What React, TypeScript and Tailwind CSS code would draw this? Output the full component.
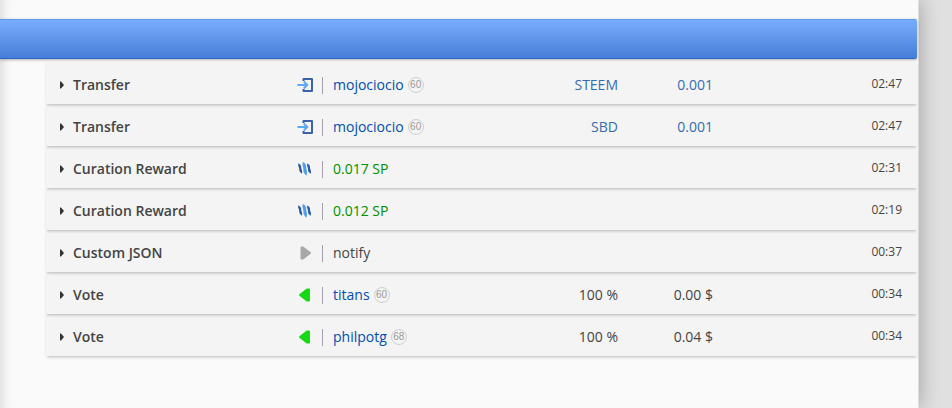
import { useState } from "react"

type IconKind = "incoming" | "steem" | "play" | "vote"

interface Operation {
  id: number
  type: string
  icon: IconKind
  text: string
  tone: "user" | "reward" | "plain"
  reputation?: number
  unit?: string
  amount?: string
  time: string
}

const operations: Operation[] = [
  { id: 1, type: "Transfer", icon: "incoming", text: "mojociocio", tone: "user", reputation: 60, unit: "STEEM", amount: "0.001", time: "02:47" },
  { id: 2, type: "Transfer", icon: "incoming", text: "mojociocio", tone: "user", reputation: 60, unit: "SBD", amount: "0.001", time: "02:47" },
  { id: 3, type: "Curation Reward", icon: "steem", text: "0.017 SP", tone: "reward", time: "02:31" },
  { id: 4, type: "Curation Reward", icon: "steem", text: "0.012 SP", tone: "reward", time: "02:19" },
  { id: 5, type: "Custom JSON", icon: "play", text: "notify", tone: "plain", time: "00:37" },
  { id: 6, type: "Vote", icon: "vote", text: "titans", tone: "user", reputation: 60, unit: "100 %", amount: "0.00 $", time: "00:34" },
  { id: 7, type: "Vote", icon: "vote", text: "philpotg", tone: "user", reputation: 68, unit: "100 %", amount: "0.04 $", time: "00:34" },
]

function OperationIcon({ kind }: { kind: IconKind }) {
  if (kind === "incoming") {
    return (
      <svg viewBox="0 0 16 16" className="h-4 w-4" fill="none" aria-hidden="true">
        <path d="M6.5 4V2H15V14H6.5V12" stroke="#3a62a8" strokeWidth="2" strokeLinejoin="round" />
        <path d="M0.5 8H10" stroke="#5fa8f2" strokeWidth="2" />
        <path d="M6.8 4.5L10.3 8L6.8 11.5" stroke="#5fa8f2" strokeWidth="2" />
      </svg>
    )
  }

  if (kind === "steem") {
    return (
      <svg viewBox="0 0 16 16" className="h-4 w-4" aria-hidden="true">
        <path d="M1.2 2.4C3 2.8 4.4 4.4 4.2 6.4C4.1 8.2 5.8 9.6 5 12.8C3.2 11.6 2 10 2.2 8C2.4 6 0.6 5 1.2 2.4Z" fill="#2a5a9f" />
        <path d="M5.8 1C8 1.8 9.4 3.8 9.2 6.2C9.1 8.4 11 10.4 9.4 14.8C7.2 13 6.1 11 6.4 8.6C6.6 6.2 4.8 4.6 5.8 1Z" fill="#539eea" />
        <path d="M10.2 2.4C12.2 3 13.2 4.6 13 6.6C12.9 8.4 14.8 9.8 13.8 12.8C11.8 11.6 10.8 10 11 8C11.2 6 9.5 5 10.2 2.4Z" fill="#2a5a9f" />
      </svg>
    )
  }

  if (kind === "play") {
    return (
      <svg viewBox="0 0 16 16" className="h-4 w-4" fill="#a8a8a8" stroke="#a8a8a8" strokeWidth="2" strokeLinejoin="round" aria-hidden="true">
        <path d="M4.5 2.5H6L13 8L6 13.5H4.5Z" />
      </svg>
    )
  }

  return (
    <svg viewBox="0 0 16 16" className="h-4 w-4" fill="#14d914" stroke="#14d914" strokeWidth="2" strokeLinejoin="round" aria-hidden="true">
      <path d="M12 2.5H10L3 8L10 13.5H12Z" />
    </svg>
  )
}

function OperationText({ operation }: { operation: Operation }) {
  if (operation.tone === "user") {
    return (
      <a href={`#@${operation.text}`} className="text-[#004eb3]">
        {operation.text}
      </a>
    )
  }

  return <span className={operation.tone === "reward" ? "text-[#009000]" : "text-[#444444]"}>{operation.text}</span>
}

function OperationRow({ operation }: { operation: Operation }) {
  const [expanded, setExpanded] = useState(false)
  const amountColor = operation.type === "Transfer" ? "text-[#356cb5]" : "text-[#444444]"

  return (
    <tr className="h-[42px] shadow-[0_2px_3px_-1px_rgba(0,0,0,0.26)]">
      <th scope="row" className="w-[251px] p-0 pt-1 text-left font-semibold">
        <button
          type="button"
          aria-expanded={expanded}
          onClick={() => setExpanded(!expanded)}
          className="flex items-center gap-2 pl-[13px]"
        >
          <svg viewBox="0 0 6 8" className={expanded ? "h-2 w-1.5 rotate-90" : "h-2 w-1.5"} aria-hidden="true">
            <path d="M1 0.5H2L5 4L2 7.5H1Z" fill="#333333" />
          </svg>
          {operation.type}
        </button>
      </th>
      <td className="w-[241px] p-0 pt-1">
        <div className="flex items-center">
          <OperationIcon kind={operation.icon} />
          <span className="mr-2.5 ml-[9px] h-[17px] w-px bg-[#a79fae]" />
          <OperationText operation={operation} />
          {operation.reputation && (
            <span className="ml-1 flex h-4 w-4 justify-center rounded-full border border-[#d0d0d0] font-['Liberation_Sans',sans-serif] text-[10px] leading-[13px] text-[#999999]">
              {operation.reputation}
            </span>
          )}
        </div>
      </td>
      <td className={`w-20 p-0 pt-1 text-right ${amountColor}`}>{operation.unit}</td>
      <td className={`w-[95px] p-0 pt-1 text-right ${amountColor}`}>{operation.amount}</td>
      <td className="p-0 pt-0.5 pr-[15px] text-right text-xs">{operation.time}</td>
    </tr>
  )
}

export default function App() {
  return (
    <div className="min-h-screen bg-[#e0e0e0] pr-[33px] font-['Open_Sans',sans-serif] text-sm text-[#444444]">
      <main className="min-h-screen border-r border-[#dedede] bg-[#fafafa] pt-[19px] pr-px shadow-[inset_12px_0_12px_-10px_rgba(0,0,0,0.14),0_0_20px_rgba(0,0,0,0.3)]">
        <header className="h-10 rounded-r-xs border-t border-b border-t-[#5b9be8] border-b-[#2f65c8] bg-linear-to-b from-[#78adfd] to-[#487dd8] shadow-[0_1px_3px_rgba(0,0,0,0.3)]" />
        <div className="pt-[3px] pl-[46px]">
          <table className="w-full table-fixed border-separate border-spacing-0 bg-[#f4f4f4]">
            <tbody>
              {operations.map((operation) => (
                <OperationRow key={operation.id} operation={operation} />
              ))}
            </tbody>
          </table>
        </div>
      </main>
    </div>
  )
}
